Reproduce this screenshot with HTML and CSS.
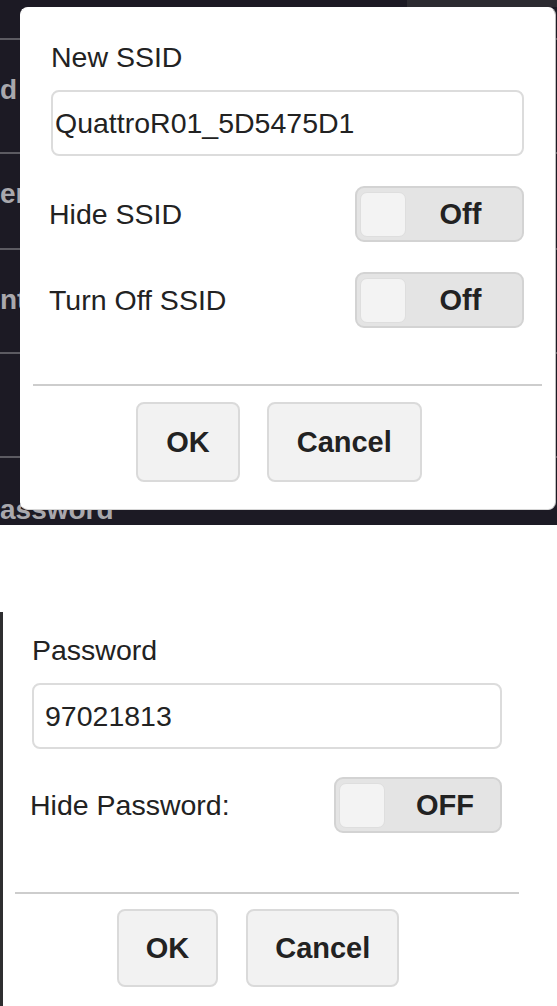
FILE: index.html
```html
<!DOCTYPE html>
<html lang="en">

<head>
    <meta charset="UTF-8">
    <meta name="viewport" content="width=device-width, initial-scale=1.0">
    <title>SSID Settings</title>
    <link rel="stylesheet" href="styles.css">
</head>

<body>
    <!-- SSID dialog over the settings list -->
    <div class="screen-top">
        <div class="backdrop">
            <div class="top-bar"><div class="top-bar-right"></div></div>
            <div class="bg-row first"></div>
            <div class="bg-row tall"><span class="bg-label">d</span></div>
            <div class="bg-row short"><span class="bg-label">en</span></div>
            <div class="bg-row"><span class="bg-label">ntr</span></div>
            <div class="bg-row"></div>
            <div class="bg-row last"><span class="bg-label">assword</span></div>
        </div>

        <div class="dialog">
            <div class="label">New SSID</div>
            <input type="text" class="field-input" value="QuattroR01_5D5475D1">

            <div class="row">
                <span class="row-label">Hide SSID</span>
                <div class="toggle"><span class="knob"></span><span class="toggle-text">Off</span></div>
            </div>

            <div class="row">
                <span class="row-label">Turn Off SSID</span>
                <div class="toggle"><span class="knob"></span><span class="toggle-text">Off</span></div>
            </div>

            <div class="divider"></div>

            <div class="buttons">
                <button class="btn">OK</button>
                <button class="btn">Cancel</button>
            </div>
        </div>
    </div>

    <!-- Password dialog -->
    <div class="screen-bottom">
        <div class="dialog-plain">
            <div class="label">Password</div>
            <input type="text" class="field-input wide-pad" value="97021813">

            <div class="row tight">
                <span class="row-label">Hide Password:</span>
                <div class="toggle small"><span class="knob"></span><span class="toggle-text">OFF</span></div>
            </div>

            <div class="divider plain"></div>

            <div class="buttons plain">
                <button class="btn">OK</button>
                <button class="btn">Cancel</button>
            </div>
        </div>
    </div>
</body>

</html>
```

FILE: styles.css
```css
body {
    font-family: "Liberation Sans", Arial, sans-serif;
    background-color: #fff;
    color: #222;
    margin: 0;
}

/* ---------- top screen ---------- */

.screen-top {
    position: relative;
    height: 525px;
    background-color: #1c1a24;
    overflow: hidden;
}

.backdrop {
    display: flex;
    flex-direction: column;
}

.top-bar {
    height: 7px;
    display: flex;
    justify-content: flex-end;
}

.top-bar-right {
    width: 150px;
    background-color: #2c2b31;
}

.bg-row {
    height: 104px;
    padding-top: 34px;
    box-sizing: border-box;
    border-bottom: 2px solid #5c5b62;
    white-space: nowrap;
}

.bg-row.first {
    height: 33px;
    padding-top: 0;
}

.bg-row.tall {
    height: 114px;
}

.bg-row.short {
    height: 96px;
    padding-top: 24px;
}

.bg-row.last {
    height: 110px;
    padding-top: 36px;
    border-bottom: none;
}

.bg-label {
    display: inline-block;
    font-size: 28px;
    font-weight: bold;
    line-height: 32px;
    color: #a9a8ad;
}

.dialog {
    position: absolute;
    left: 20px;
    top: 7px;
    width: 536px;
    box-sizing: border-box;
    padding: 32px 31px 27px 30px;
    background-color: #fff;
    border: 1px solid #fff;
    border-right-color: #bdbdbd;
    border-bottom-color: #d6d6d6;
    border-radius: 8px;
}

/* ---------- shared dialog parts ---------- */

.label {
    font-size: 28.5px;
    line-height: 34px;
}

.field-input {
    display: block;
    width: 100%;
    height: 66px;
    margin-top: 16px;
    box-sizing: border-box;
    padding: 0 2px;
    font-family: inherit;
    font-size: 28.5px;
    color: #222;
    background-color: #fff;
    border: 2px solid #dcdcdc;
    border-radius: 8px;
    outline: none;
}

.field-input.wide-pad {
    padding: 0 11px;
}

.row {
    display: flex;
    justify-content: space-between;
    align-items: center;
    margin-top: 30px;
}

.row.tight {
    margin-top: 28px;
}

.row-label {
    font-size: 28.5px;
    line-height: 34px;
    margin-left: -2px;
}

.toggle {
    width: 169px;
    height: 56px;
    box-sizing: border-box;
    padding: 3px;
    display: flex;
    align-items: center;
    background-color: #e4e4e4;
    border: 2px solid #d3d3d3;
    border-radius: 9px;
}

.toggle.small {
    width: 168px;
}

.knob {
    width: 46px;
    height: 45px;
    box-sizing: border-box;
    background-color: #f3f3f3;
    border: 1px solid #dedede;
    border-radius: 7px;
}

.toggle-text {
    flex: 1;
    text-align: center;
    font-size: 29px;
    font-weight: bold;
    padding-right: 4px;
}

.toggle.small .toggle-text {
    padding-right: 0;
    padding-left: 8px;
}

.divider {
    margin: 56px -18px 0 -18px;
    border-top: 2px solid #cdcdcd;
}

.buttons {
    display: flex;
    justify-content: center;
    gap: 27px;
    margin-top: 16px;
    padding-right: 17px;
}

.btn {
    height: 80px;
    padding: 0 28px;
    font-family: inherit;
    font-size: 29px;
    font-weight: bold;
    color: #222;
    background-color: #f2f2f2;
    border: 2px solid #dadada;
    border-radius: 8px;
    cursor: pointer;
}

/* ---------- bottom screen ---------- */

.screen-bottom {
    margin-top: 87px;
    height: 394px;
    border-left: 3px solid #2e2e30;
}

.dialog-plain {
    padding: 21px 55px 0 29px;
}

.divider.plain {
    margin: 59px -17px 0 -17px;
}

.buttons.plain {
    gap: 28px;
    margin-top: 15px;
    padding-right: 18px;
}

.buttons.plain .btn {
    height: 78px;
    padding: 0 27px;
}
```
